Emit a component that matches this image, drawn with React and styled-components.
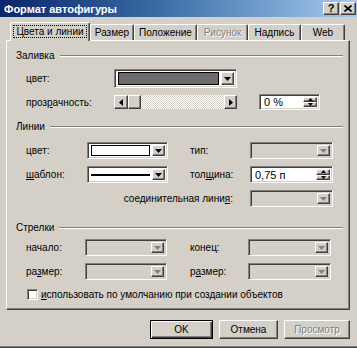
import React from 'react';
import styled, { createGlobalStyle } from 'styled-components';

const GlobalStyle = createGlobalStyle`
  html, body {
    margin: 0;
    padding: 0;
    background: #d4d0c8;
  }
  body {
    font-family: "Liberation Sans", Arial, sans-serif;
    font-size: 10px;
    color: #000;
  }
  * { box-sizing: border-box; }
`;

const raised = `
  border-top: 1px solid #fff;
  border-left: 1px solid #fff;
  border-right: 1px solid #404040;
  border-bottom: 1px solid #404040;
  box-shadow: inset -1px -1px 0 #808080;
`;

const sunken = `
  border-top: 1px solid #808080;
  border-left: 1px solid #808080;
  border-right: 1px solid #fff;
  border-bottom: 1px solid #fff;
  box-shadow: inset 1px 1px 0 #404040, inset -1px -1px 0 #d4d0c8;
`;

const Window = styled.div`
  width: 357px;
  height: 348px;
  background: #d4d0c8;
  border-bottom: 1px solid #404040;
  box-shadow: inset 0 -1px 0 #808080;
  overflow: hidden;
`;

const TitleBar = styled.div`
  height: 17px;
  display: flex;
  align-items: center;
  justify-content: space-between;
  padding: 0 1px 0 4px;
  background: linear-gradient(to right, #0a246a, #3a6ea5 45%, #a6caf0);
  color: #fff;
  font-weight: bold;
  font-size: 11px;
`;

const CaptionButtons = styled.div`
  display: flex;
  gap: 1px;
`;

const CaptionButton = styled.div`
  width: 16px;
  height: 13px;
  ${raised}
  background: #d4d0c8;
  color: #000;
  display: flex;
  align-items: center;
  justify-content: center;
  font-size: 11px;
  font-weight: bold;
  line-height: 1;
`;

const TabStrip = styled.div`
  margin-top: 5px;
  height: 18px;
  padding-left: 10px;
  display: flex;
  align-items: flex-end;
  position: relative;
  z-index: 1;
`;

const Tab = styled.div`
  width: ${p => p.$w}px;
  height: ${p => (p.$active ? 19 : 16)}px;
  margin-bottom: ${p => (p.$active ? -1 : 0)}px;
  background: #d4d0c8;
  border-top: 1px solid #fff;
  border-left: 1px solid #fff;
  border-right: 1px solid #404040;
  box-shadow: inset -1px 0 0 #808080;
  border-radius: 2px 2px 0 0;
  display: flex;
  align-items: center;
  justify-content: center;
  padding-bottom: ${p => (p.$active ? 2 : 0)}px;
  color: ${p => (p.$disabled ? '#808080' : '#000')};
  text-shadow: ${p => (p.$disabled ? '1px 1px 0 #fff' : 'none')};
  white-space: nowrap;
`;

const Focus = styled.span`
  border: 1px dotted #000;
  padding: 0 2px;
  line-height: 11px;
`;

const Panel = styled.div`
  margin-left: 6px;
  width: 344px;
  height: 270px;
  border-top: 1px solid #fff;
  border-left: 1px solid #fff;
  border-right: 1px solid #404040;
  border-bottom: 1px solid #404040;
  box-shadow: inset -1px -1px 0 #808080;
  padding: 9px 6px 0 9px;
  display: flex;
  flex-direction: column;
`;

const GroupHeader = styled.div`
  display: flex;
  align-items: center;
  height: 11px;
  line-height: 11px;
  margin-top: ${p => p.$mt || 0}px;
`;

const HeaderLine = styled.div`
  flex: 1;
  margin-left: 5px;
  border-top: 1px solid #808080;
  border-bottom: 1px solid #fff;
`;

const Grid = styled.div`
  display: grid;
  grid-template-columns: ${p => p.$cols};
  grid-template-rows: ${p => p.$rows};
  row-gap: ${p => p.$gap}px;
  margin: ${p => p.$mt}px 0 0 10px;
`;

const Label = styled.div`
  align-self: center;
  white-space: nowrap;
  grid-column: ${p => p.$col || 'auto'};
  text-align: ${p => (p.$right ? 'right' : 'left')};
  padding-right: ${p => (p.$right ? 17 : 0)}px;
`;

const Combo = styled.div`
  grid-column: ${p => p.$col || 'auto'};
  align-self: center;
  height: ${p => p.$h || 17}px;
  ${sunken}
  background: ${p => (p.$disabled ? '#d4d0c8' : '#fff')};
  display: flex;
  padding: 2px;
`;

const ComboField = styled.div`
  flex: 1;
  display: flex;
  align-items: center;
  padding: 0 2px 0 1px;
`;

const Swatch = styled.div`
  flex: 1;
  height: 100%;
  border: 1px solid #000;
  background: ${p => p.$color};
`;

const LineSample = styled.div`
  flex: 1;
  height: 2px;
  background: #000;
`;

const ComboButton = styled.div`
  width: 13px;
  ${raised}
  background: #d4d0c8;
  display: flex;
  align-items: center;
  justify-content: center;
`;

const Slider = styled.div`
  align-self: center;
  height: 14px;
  display: flex;
`;

const SliderButton = styled.div`
  width: ${p => p.$w}px;
  ${raised}
  background: #d4d0c8;
  display: flex;
  align-items: center;
  justify-content: center;
`;

const Track = styled.div`
  flex: 1;
  background-image: repeating-conic-gradient(#fff 0 25%, #d4d0c8 0 50%);
  background-size: 2px 2px;
`;

const Spin = styled.div`
  grid-column: ${p => p.$col || 'auto'};
  align-self: center;
  height: ${p => p.$h}px;
  ${sunken}
  background: #fff;
  display: flex;
  padding: 2px;
`;

const SpinValue = styled.div`
  flex: 1;
  display: flex;
  align-items: center;
  padding-left: 2px;
  font-size: 11px;
`;

const SpinButtons = styled.div`
  width: 14px;
  display: flex;
  flex-direction: column;
`;

const SpinButton = styled.div`
  flex: 1;
  ${raised}
  background: #d4d0c8;
  display: flex;
  align-items: center;
  justify-content: center;
`;

const CheckRow = styled.div`
  margin: 9px 0 0 11px;
  height: 11px;
  display: flex;
  align-items: center;
  gap: 3px;
`;

const CheckBox = styled.div`
  width: 11px;
  height: 11px;
  ${sunken}
  background: #fff;
`;

const ButtonRow = styled.div`
  margin-top: 10px;
  padding-right: 7px;
  display: flex;
  justify-content: flex-end;
  gap: 6px;
`;

const Button = styled.div`
  width: ${p => p.$w}px;
  height: 19px;
  background: #d4d0c8;
  display: flex;
  align-items: center;
  justify-content: center;
  ${p => (p.$default
    ? `border: 1px solid #000;
       box-shadow: inset 1px 1px 0 #fff, inset -1px -1px 0 #404040, inset -2px -2px 0 #808080;`
    : raised)}
  color: ${p => (p.$disabled ? '#808080' : '#000')};
  text-shadow: ${p => (p.$disabled ? '1px 1px 0 #fff' : 'none')};
`;

function Arrow({ dir = 'down', color = '#000', size = 7 }) {
  const h = Math.ceil(size / 2);
  const paths = {
    down: `M0 0H${size}L${size / 2} ${h}Z`,
    up: `M0 ${h}H${size}L${size / 2} 0Z`,
  };
  if (dir === 'left' || dir === 'right') {
    const d = dir === 'left' ? `M${h} 0V${size}L0 ${size / 2}Z` : `M0 0V${size}L${h} ${size / 2}Z`;
    return (
      <svg width={h} height={size} viewBox={`0 0 ${h} ${size}`}>
        <path d={d} fill={color} />
      </svg>
    );
  }
  return (
    <svg width={size} height={h} viewBox={`0 0 ${size} ${h}`}>
      <path d={paths[dir]} fill={color} />
    </svg>
  );
}

function Dropdown({ col, h, disabled, children }) {
  return (
    <Combo $col={col} $h={h} $disabled={disabled}>
      <ComboField>{children}</ComboField>
      <ComboButton>
        <Arrow color={disabled ? '#808080' : '#000'} />
      </ComboButton>
    </Combo>
  );
}

function SpinBox({ col, h, value }) {
  return (
    <Spin $col={col} $h={h}>
      <SpinValue>{value}</SpinValue>
      <SpinButtons>
        <SpinButton><Arrow dir="up" size={5} /></SpinButton>
        <SpinButton><Arrow dir="down" size={5} /></SpinButton>
      </SpinButtons>
    </Spin>
  );
}

const tabs = [
  { label: 'Цвета и линии', w: 80, active: true },
  { label: 'Размер', w: 44 },
  { label: 'Положение', w: 63 },
  { label: 'Рисунок', w: 51, disabled: true },
  { label: 'Надпись', w: 53 },
  { label: 'Web', w: 44 },
];

export default function App() {
  return (
    <Window>
      <GlobalStyle />
      <TitleBar>
        <span>Формат автофигуры</span>
        <CaptionButtons>
          <CaptionButton>?</CaptionButton>
          <CaptionButton>
            <svg width="8" height="7" viewBox="0 0 8 7">
              <path d="M0.5 0.5L7.5 6.5M7.5 0.5L0.5 6.5" stroke="#000" strokeWidth="1.6" />
            </svg>
          </CaptionButton>
        </CaptionButtons>
      </TitleBar>

      <TabStrip>
        {tabs.map(t => (
          <Tab key={t.label} $w={t.w} $active={t.active} $disabled={t.disabled}>
            {t.active ? <Focus>{t.label}</Focus> : t.label}
          </Tab>
        ))}
      </TabStrip>

      <Panel>
        <GroupHeader>
          Заливка
          <HeaderLine />
        </GroupHeader>
        <Grid $cols="88px 123px 22px 61px" $rows="19px 16px" $gap={6} $mt={8}>
          <Label>цвет:</Label>
          <Dropdown h={19}>
            <Swatch $color="#6c6c68" />
          </Dropdown>
          <div />
          <div />
          <Label>проз<u>р</u>ачность:</Label>
          <Slider>
            <SliderButton $w={14}><Arrow dir="left" /></SliderButton>
            <SliderButton $w={13} />
            <Track />
            <SliderButton $w={13}><Arrow dir="right" /></SliderButton>
          </Slider>
          <div />
          <SpinBox h={16} value="0 %" />
        </Grid>

        <GroupHeader $mt={11}>
          Линии
          <HeaderLine />
        </GroupHeader>
        <Grid $cols="61px 81px 22px 60px 83px" $rows="17px 17px 17px" $gap={7} $mt={10}>
          <Label>цвет:</Label>
          <Dropdown>
            <Swatch $color="#fff" />
          </Dropdown>
          <div />
          <Label>тип:</Label>
          <Dropdown disabled />

          <Label><u>ш</u>аблон:</Label>
          <Dropdown>
            <LineSample />
          </Dropdown>
          <div />
          <Label>тол<u>щ</u>ина:</Label>
          <SpinBox h={17} value="0,75 п" />

          <Label $col="1 / 5" $right>соединительная лини<u>я</u>:</Label>
          <Dropdown col="5" disabled />
        </Grid>

        <GroupHeader $mt={15}>
          Стрелки
          <HeaderLine />
        </GroupHeader>
        <Grid $cols="59px 82px 23px 58px 83px" $rows="17px 17px" $gap={7} $mt={6}>
          <Label>начало:</Label>
          <Dropdown disabled />
          <div />
          <Label>конец:</Label>
          <Dropdown disabled />

          <Label>ра<u>з</u>мер:</Label>
          <Dropdown disabled />
          <div />
          <Label>р<u>а</u>змер:</Label>
          <Dropdown disabled />
        </Grid>

        <CheckRow>
          <CheckBox />
          <span><u>и</u>спользовать по умолчанию при создании объектов</span>
        </CheckRow>
      </Panel>

      <ButtonRow>
        <Button $w={63} $default>OK</Button>
        <Button $w={59}>Отмена</Button>
        <Button $w={66} $disabled>Просмотр</Button>
      </ButtonRow>
    </Window>
  );
}
